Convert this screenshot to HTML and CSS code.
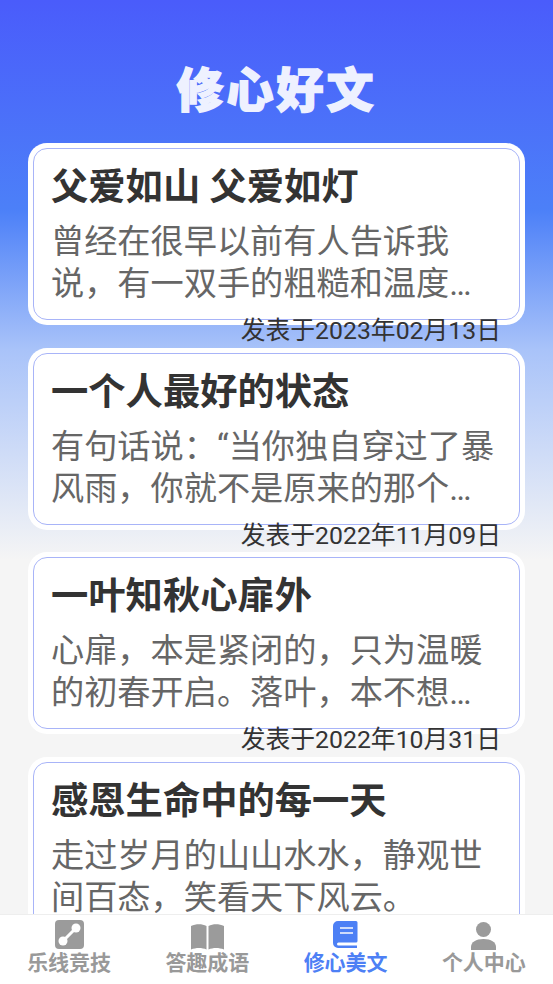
FILE: index.html
```html
<!DOCTYPE html>
<html lang="zh-CN">
<head>
    <meta charset="UTF-8">
    <meta name="viewport" content="width=device-width, initial-scale=1.0">
    <title>修心好文</title>
    <link rel="stylesheet" href="styles.css">
</head>
<body>
    <div class="page">
        <h1 class="page-title">修心好文</h1>
        <div class="article-list">
            <div class="article">
                <div class="article-card">
                    <h2>父爱如山 父爱如灯</h2>
                    <p>曾经在很早以前有人告诉我说，有一双手的粗糙和温度是我一生都不能忘记的</p>
                </div>
                <div class="article-date">发表于2023年02月13日</div>
            </div>
            <div class="article">
                <div class="article-card">
                    <h2>一个人最好的状态</h2>
                    <p>有句话说：“当你独自穿过了暴风雨，你就不是原来的那个人了，这就是</p>
                </div>
                <div class="article-date">发表于2022年11月09日</div>
            </div>
            <div class="article">
                <div class="article-card">
                    <h2>一叶知秋心扉外</h2>
                    <p>心扉，本是紧闭的，只为温暖的初春开启。落叶，本不想离开枝头的怀抱</p>
                </div>
                <div class="article-date">发表于2022年10月31日</div>
            </div>
            <div class="article">
                <div class="article-card">
                    <h2>感恩生命中的每一天</h2>
                    <p>走过岁月的山山水水，静观世间百态，笑看天下风云。</p>
                </div>
            </div>
        </div>
    </div>
    <nav class="tabbar">
        <div class="tab">
            <svg viewBox="0 0 29 30" width="29" height="30"><rect width="29" height="29" rx="4" fill="#9b9b9b"/><path d="M8 21 21 8" stroke="#fff" stroke-width="3"/><circle cx="8" cy="21" r="4.500" fill="#fff"/><circle cx="21" cy="8" r="4.500" fill="#fff"/></svg>
            <span>乐线竞技</span>
        </div>
        <div class="tab">
            <svg viewBox="0 0 33 30" width="33" height="30"><path d="M0 6C5 3.500 11 3.500 15.500 6v23.500C11 27.500 5 27.500 0 29.500zM33 6C28 3.500 22 3.500 17.500 6v23.500c4.500-2 10.500-2 15.500 0z" fill="#9b9b9b"/></svg>
            <span>答趣成语</span>
        </div>
        <div class="tab active">
            <svg viewBox="0 0 25 30" width="25" height="30"><path d="M5 1h18a1.500 1.500 0 0 1 1.500 1.500V21a1.500 1.500 0 0 1-1.500 1.500H5.500a1.500 1.500 0 0 0 0 3H24V28H5a5 5 0 0 1-5-5V6a5 5 0 0 1 5-5z" fill="#4d80f5"/><path d="M7 8h13M7 13h13" stroke="#cfdcfb" stroke-width="2"/></svg>
            <span>修心美文</span>
        </div>
        <div class="tab">
            <svg viewBox="0 0 25 30" width="25" height="30"><circle cx="12.500" cy="9.500" r="7.500" fill="#9b9b9b"/><path d="M0 30v-3c0-5 5-8 12.500-8S25 22 25 27v3z" fill="#9b9b9b"/></svg>
            <span>个人中心</span>
        </div>
    </nav>
</body>
</html>
```

FILE: styles.css
```css
html, body {
    margin: 0;
    height: 100%;
}
body {
    font-family: Roboto, "Noto Sans CJK SC", sans-serif;
    background-color: #f5f5f5;
    overflow: hidden;
    position: relative;
}
.page {
    height: 914px;
    overflow: hidden;
    background: linear-gradient(180deg, #4a5cfb 0, #4c80f8 210px, #a9c3f9 350px, #f5f5f5 560px);
}
.page-title {
    margin: 0;
    padding-top: 63px;
    height: 85px;
    text-align: center;
    font-size: 47px;
    line-height: 56px;
    letter-spacing: 3px;
    font-weight: 900;
    color: #eef1ff;
    -webkit-text-stroke: 1.5px #eef1ff;
}
.article-list {
    padding: 0 28px;
}
.article {
    height: 204.500px;
}
.article-card {
    height: 172px;
    box-sizing: border-box;
    padding: 13px 17px 0;
    background: white;
    border: 1px solid #a8b4f8;
    border-radius: 14px;
    box-shadow: 0 0 0 5px white;
    margin: 0 5px;
}
.article-card h2 {
    margin: 0;
    font-size: 37.300px;
    line-height: 50px;
    font-weight: 700;
    color: #333;
}
.article-card p {
    margin: 9px 0 0;
    font-size: 33.200px;
    line-height: 42px;
    color: #666;
    display: -webkit-box;
    -webkit-box-orient: vertical;
    -webkit-line-clamp: 2;
    overflow: hidden;
}
.article-date {
    text-align: right;
    padding-right: 24px;
    margin-top: -4px;
    font-size: 24.800px;
    line-height: 30px;
    color: #333;
    position: relative;
}
.tabbar {
    position: absolute;
    left: 0;
    right: 0;
    bottom: 0;
    height: 69px;
    display: flex;
    justify-content: space-around;
    background: white;
    border-top: 1px solid #eee;
}
.tab {
    display: flex;
    flex-direction: column;
    align-items: center;
    justify-content: flex-start;
    width: 138px;
    padding-top: 5px;
    font-size: 21px;
    line-height: 28px;
    font-weight: 700;
    color: #999;
}
.tab svg {
    display: block;
}
.tab span {
    margin-top: -1px;
}
.tab.active {
    color: #4d80f5;
}
```
